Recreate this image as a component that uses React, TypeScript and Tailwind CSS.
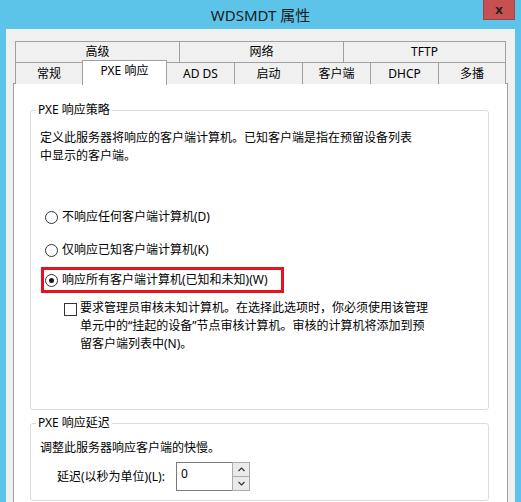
import React from "react";

const tabBase =
  "flex items-center justify-center border border-b-0 border-[#A0A0A0] bg-[#F0F0F0] text-[12px] text-black";

function Radio({ checked }: { checked?: boolean }) {
  return (
    <span className="relative flex h-[13px] w-[13px] shrink-0 items-center justify-center rounded-full border border-[#333333] bg-white">
      {checked && <span className="h-[5px] w-[5px] rounded-full bg-[#1a1a1a]" />}
    </span>
  );
}

export default function App() {
  return (
    <div className="flex h-[502px] w-[521px] flex-col overflow-hidden bg-[#5CC4E8] font-['Noto_Sans','Noto_Sans_CJK_SC',sans-serif] text-black">
      {/* Title bar */}
      <div className="relative flex h-[29px] shrink-0 items-center justify-center">
        <span className="text-[15px] leading-[20px] text-[#1b1b1b]">WDSMDT 属性</span>
        <div className="absolute right-[6px] top-0 flex h-[20px] w-[32px] items-center justify-center border border-t-0 border-[#A34444] bg-[#C75050]">
          <span className="text-[13px] font-bold leading-none text-[#222]">x</span>
        </div>
      </div>

      {/* Body */}
      <div className="mx-[6px] flex-1 bg-[#F0F0F0] pt-[12px]">
        {/* Tabs */}
        <div className="ml-[9px] w-[491px]">
          <div className="flex h-[21px]">
            <div className={`${tabBase} w-[165px]`}>高级</div>
            <div className={`${tabBase} -ml-px w-[165px]`}>网络</div>
            <div className={`${tabBase} -ml-px w-[163px]`}>TFTP</div>
          </div>
          <div className="flex h-[21px] border-t border-[#A0A0A0]">
            <div className={`${tabBase} -mt-px h-[22px] w-[68px]`}>常规</div>
            <div className="relative z-10 -ml-px -mt-[3px] flex h-[25px] w-[85px] items-center justify-center self-start border border-b-0 border-[#A0A0A0] bg-white pb-[4px] text-[12px]">
              PXE 响应
            </div>
            <div className={`${tabBase} -ml-px -mt-px h-[22px] w-[69px]`}>AD DS</div>
            <div className={`${tabBase} -ml-px -mt-px h-[22px] w-[69px]`}>启动</div>
            <div className={`${tabBase} -ml-px -mt-px h-[22px] w-[69px]`}>客户端</div>
            <div className={`${tabBase} -ml-px -mt-px h-[22px] w-[69px]`}>DHCP</div>
            <div className={`${tabBase} -ml-px -mt-px h-[22px] w-[68px]`}>多播</div>
          </div>
        </div>

        {/* Panel */}
        <div className="ml-[7px] h-[440px] w-[495px] border border-[#A0A0A0] bg-white">
          {/* Group 1 */}
          <fieldset className="ml-[16px] mt-[17px] h-[309px] w-[459px] rounded-[3px] border border-[#DCDCDC] px-[5px]">
            <legend className="px-[2px] text-[12px] leading-[18px]">PXE 响应策略</legend>
            <div className="pl-[4px] text-[12px] leading-[18px]">
              <p className="mt-[10px] whitespace-nowrap">
                定义此服务器将响应的客户端计算机。已知客户端是指在预留设备列表
                <br />
                中显示的客户端。
              </p>
              <div className="mt-[43px] flex h-[18px] items-center gap-[4px] pl-[5px]">
                <Radio />
                <span>不响应任何客户端计算机(D)</span>
              </div>
              <div className="mt-[15px] flex h-[18px] items-center gap-[4px] pl-[5px]">
                <Radio />
                <span>仅响应已知客户端计算机(K)</span>
              </div>
              <div className="ml-[1px] mt-[8px] flex h-[26px] w-[243px] items-center gap-[4px] border-[3px] border-[#E3141E] pl-[1px]">
                <Radio checked />
                <span>响应所有客户端计算机(已知和未知)(W)</span>
              </div>
              <div className="mt-[6px] flex items-start pl-[24px]">
                <span className="mt-[4px] h-[13px] w-[13px] shrink-0 border border-[#333333] bg-white" />
                <p className="ml-[3px] whitespace-nowrap">
                  要求管理员审核未知计算机。在选择此选项时，你必须使用该管理
                  <br />
                  单元中的“挂起的设备”节点审核计算机。审核的计算机将添加到预
                  <br />
                  留客户端列表中(N)。
                </p>
              </div>
            </div>
          </fieldset>

          {/* Group 2 */}
          <fieldset className="ml-[16px] mt-[4px] h-[87px] w-[459px] rounded-[3px] border border-[#DCDCDC] px-[5px]">
            <legend className="px-[2px] text-[12px] leading-[18px]">PXE 响应延迟</legend>
            <div className="pl-[4px] text-[12px] leading-[18px]">
              <p className="mt-[7px]">调整此服务器响应客户端的快慢。</p>
              <div className="mt-[5px] flex h-[29px] items-center">
                <span className="w-[136px] pl-[17px]">延迟(以秒为单位)(L):</span>
                <div className="h-[29px] w-[57px] border border-[#7A7A7A] bg-white pl-[4px] pt-[2px] leading-[18px]">
                  0
                </div>
                <div className="-ml-px flex h-[29px] w-[18px] flex-col">
                  <div className="flex h-[15px] items-center justify-center border border-[#ACACAC] bg-[#EAEAEA]">
                    <svg width="7" height="5" viewBox="0 0 7 5">
                      <path d="M0.5 4 L3.5 1 L6.5 4" fill="none" stroke="#333" strokeWidth="1.2" />
                    </svg>
                  </div>
                  <div className="-mt-px flex h-[15px] items-center justify-center border border-[#ACACAC] bg-[#EAEAEA]">
                    <svg width="7" height="5" viewBox="0 0 7 5">
                      <path d="M0.5 1 L3.5 4 L6.5 1" fill="none" stroke="#333" strokeWidth="1.2" />
                    </svg>
                  </div>
                </div>
              </div>
            </div>
          </fieldset>
        </div>
      </div>
    </div>
  );
}
